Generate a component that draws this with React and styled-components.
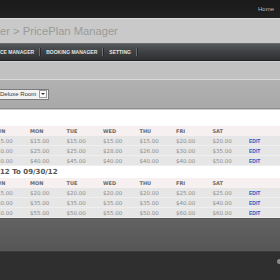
import React from "react";
import styled, { createGlobalStyle } from "styled-components";

const GlobalStyle = createGlobalStyle`
  html, body {
    margin: 0;
    padding: 0;
    background: #2e2e2e;
    overflow: hidden;
  }
`;

const Page = styled.div`
  width: 280px;
  height: 280px;
  display: flex;
  flex-direction: column;
  overflow: hidden;
  font-family: "Liberation Sans", Arial, sans-serif;
`;

const TopBar = styled.div`
  height: 18px;
  flex-shrink: 0;
  background: linear-gradient(#1a1a1a, #222);
  display: flex;
  align-items: center;
  justify-content: flex-end;
  padding-right: 6px;
`;

const HomeLink = styled.a`
  font-size: 6px;
  color: #c4c4c4;
  text-shadow: 0 0 1px #000;
`;

const TitleBand = styled.div`
  height: 24px;
  flex-shrink: 0;
  background: #c9c9c9;
  border-top: 1px solid #dcdcdc;
  display: flex;
  align-items: center;
`;

const Title = styled.h1`
  margin: 0;
  font-size: 11.2px;
  font-weight: normal;
  color: #9a9a9a;
  white-space: nowrap;
`;

const Nav = styled.div`
  height: 16px;
  flex-shrink: 0;
  background: linear-gradient(#55585b, #3a3c3e 60%, #2f3133);
  border-top: 1px solid #6a6d70;
  border-bottom: 1px solid #1f2021;
  display: flex;
  align-items: center;
`;

const NavItem = styled.span`
  font-size: 5px;
  font-weight: bold;
  color: #e2e2e2;
  white-space: nowrap;
  padding: 0 5px;
  &:first-child {
    padding-left: 0;
  }
`;

const NavSep = styled.span`
  width: 1px;
  height: 8px;
  background: #6b6e71;
  border-right: 1px solid #27292a;
`;

const FilterTop = styled.div`
  height: 17px;
  flex-shrink: 0;
  background: #c1c1c1;
  border-top: 1px solid #d2d2d2;
  border-bottom: 1px solid #d9d9d9;
`;

const FilterBar = styled.div`
  height: 28px;
  flex-shrink: 0;
  background: linear-gradient(#b1b1b1, #a9a9a9);
  border-bottom: 1px solid #8e8e8e;
  display: flex;
  align-items: center;
`;

const Select = styled.div`
  width: 49px;
  height: 11px;
  background: #f3f3f3;
  border: 1px solid #7c7c7c;
  border-left: none;
  display: flex;
  align-items: center;
  justify-content: space-between;
  padding-right: 1px;
  box-sizing: border-box;
  font-size: 6px;
  color: #333;
`;

const SelectArrow = styled.span`
  width: 8px;
  height: 8px;
  box-sizing: border-box;
  border: 1px solid #999;
  background: #fafafa;
  display: flex;
  align-items: center;
  justify-content: center;
  &::after {
    content: "";
    border-left: 2px solid transparent;
    border-right: 2px solid transparent;
    border-top: 2px solid #333;
  }
`;

const Content = styled.div`
  background: #fff;
  border-top: 1px solid #cfcfcf;
  padding-top: 16px;
  overflow: hidden;
  flex-shrink: 0;
`;

const Grid = styled.div`
  display: grid;
  grid-template-columns: repeat(7, 36.5px) 1fr;
  margin-left: -6.5px;
`;

const Cell = styled.div`
  height: 10px;
  display: flex;
  align-items: center;
  white-space: nowrap;
  font-family: ${(p) =>
    p.$edit ? '"Liberation Sans", Arial, sans-serif' : '"DejaVu Sans", Verdana, sans-serif'};
  font-size: ${(p) => (p.$head ? 5 : p.$edit ? 5 : 5.5)}px;
  font-weight: ${(p) => (p.$edit ? "bold" : p.$head ? 600 : "normal")};
  color: ${(p) => (p.$edit ? "#2a5bc4" : p.$head ? "#6a6a6a" : "#8c8c8c")};
  background: ${(p) => (p.$head ? "#f6f0f0" : "#e6e6e6")};
  box-shadow: ${(p) => (p.$head ? "none" : "inset 0 -1px 0 #efefef")};
`;

const DateHeading = styled.div`
  height: 12px;
  display: flex;
  align-items: center;
  font-family: "DejaVu Sans", Verdana, sans-serif;
  font-size: 7px;
  font-weight: bold;
  color: #555;
  white-space: nowrap;
`;

const FooterTop = styled.div`
  height: 32px;
  flex-shrink: 0;
  background: linear-gradient(#626262, #565656);
  border-top: 1px solid #555;
`;

const FooterBottom = styled.div`
  flex: 1;
  background: #2f2f2f;
  border-top: 1px solid #3a3a3a;
  display: flex;
  justify-content: flex-end;
  padding-top: 7px;
`;

const Dot = styled.span`
  width: 5px;
  height: 5px;
  border-radius: 50%;
  background: #8a8a8a;
  margin-right: -2px;
`;

const DAYS = ["SUN", "MON", "TUE", "WED", "THU", "FRI", "SAT"];

const SECTION_ONE = [
  ["$15.00", "$15.00", "$15.00", "$15.00", "$15.00", "$20.00", "$20.00"],
  ["$20.00", "$25.00", "$25.00", "$28.00", "$26.00", "$30.00", "$35.00"],
  ["$40.00", "$40.00", "$45.00", "$40.00", "$40.00", "$40.00", "$50.00"],
];

const SECTION_TWO = [
  ["$15.00", "$20.00", "$20.00", "$20.00", "$20.00", "$25.00", "$25.00"],
  ["$30.00", "$35.00", "$35.00", "$35.00", "$35.00", "$40.00", "$40.00"],
  ["$50.00", "$55.00", "$50.00", "$55.00", "$50.00", "$60.00", "$60.00"],
];

const PriceTable = ({ rows }) => (
  <Grid>
    {DAYS.map((d) => (
      <Cell key={d} $head>
        {d}
      </Cell>
    ))}
    <Cell $head />
    {rows.map((row, i) => (
      <React.Fragment key={i}>
        {row.map((v, j) => (
          <Cell key={j}>{v}</Cell>
        ))}
        <Cell $edit>EDIT</Cell>
      </React.Fragment>
    ))}
  </Grid>
);

export default function App() {
  return (
    <>
      <GlobalStyle />
      <Page>
        <TopBar>
          <HomeLink>Home</HomeLink>
        </TopBar>
        <TitleBand>
          <Title>er &gt; PricePlan Manager</Title>
        </TitleBand>
        <Nav>
          <NavItem>CE MANAGER</NavItem>
          <NavSep />
          <NavItem>BOOKING MANAGER</NavItem>
          <NavSep />
          <NavItem>SETTING</NavItem>
          <NavSep />
        </Nav>
        <FilterTop />
        <FilterBar>
          <Select>
            <span>Deluxe Room</span>
            <SelectArrow />
          </Select>
        </FilterBar>
        <Content>
          <PriceTable rows={SECTION_ONE} />
          <DateHeading>12 To 09/30/12</DateHeading>
          <PriceTable rows={SECTION_TWO} />
        </Content>
        <FooterTop />
        <FooterBottom>
          <Dot />
        </FooterBottom>
      </Page>
    </>
  );
}
